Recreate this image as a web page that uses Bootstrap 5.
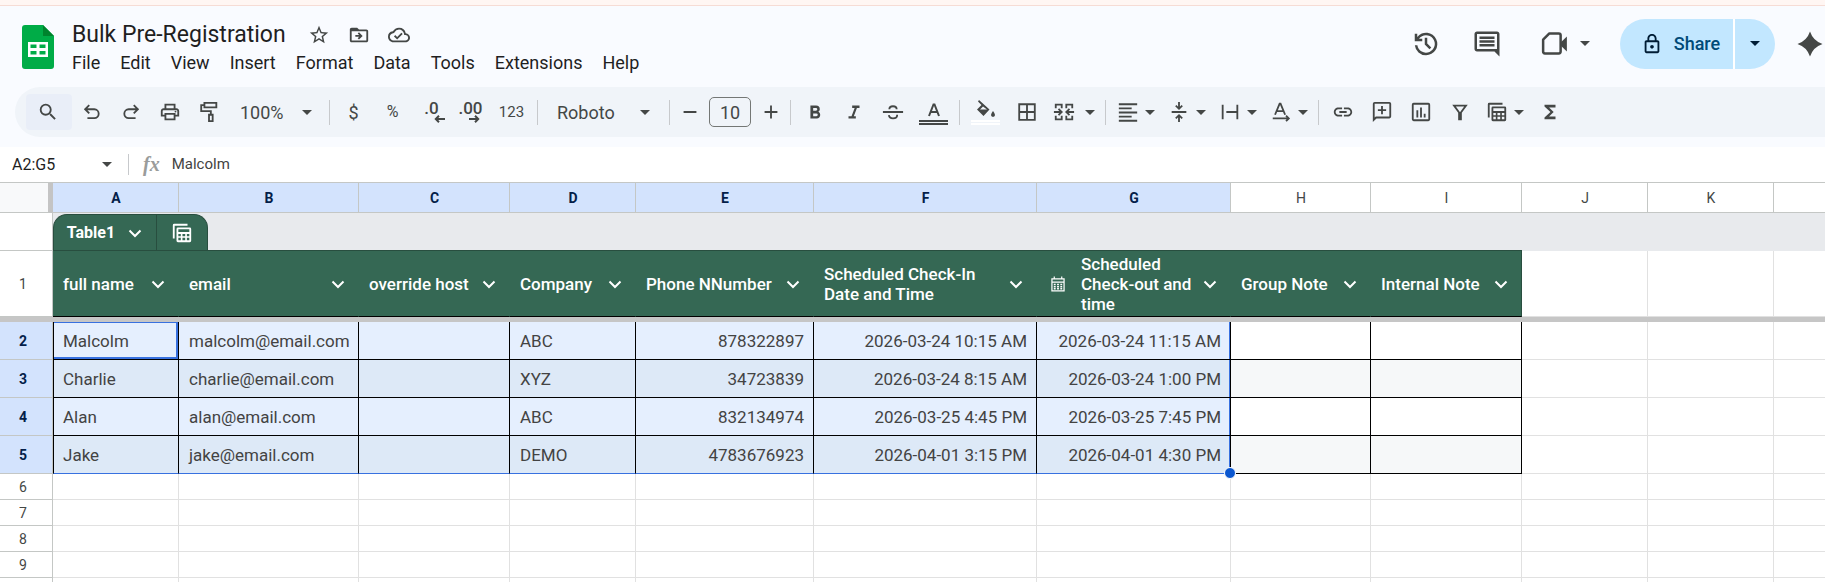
<!DOCTYPE html>
<html lang="en">
<head>
<meta charset="utf-8">
<meta name="viewport" content="width=device-width, initial-scale=1">
<title>Bulk Pre-Registration</title>
<link href="https://cdn.jsdelivr.net/npm/bootstrap@5.3.0/dist/css/bootstrap.min.css" rel="stylesheet">
<style>
:root{--ink:#444746;--green:#356854;--green-dark:#284e3f;--line:#c4c7c5;--grid:#e1e1e1;--blue:#3871e0}
body{font-family:Roboto,"Liberation Sans",sans-serif;color:#1f1f1f;background:#fff;overflow:hidden}
button,input{font-family:inherit}
svg{display:block;flex:none}
.ic{width:22px;height:22px;fill:currentColor}
.ic-lg{width:30px;height:30px;fill:currentColor}
.ln{fill:none;stroke:currentColor;stroke-width:2}
.caret{width:10px;height:5px;fill:currentColor}
.plain{border:0;background:none;padding:0;color:var(--ink);display:flex;align-items:center;justify-content:center}
.top-strip{height:6px;background:#fff6f3;border-bottom:1px solid #f6dcd5}
.app-head{background:#f9fbff;padding-bottom:10px}
.title-row{height:81px;padding-left:22px}
.title-text{margin-left:18px}
.title-icons{gap:18px;margin-left:22px}
.doc-name{font-size:23px;line-height:28px;font-weight:400;margin:0}
.menus{gap:20px;font-size:18px;line-height:20px}
.menus a{color:#1f1f1f;text-decoration:none}
.actions{padding-bottom:6px}
.actions .history{margin-right:31px}
.actions .meet{gap:10px;padding:0 14px 0 38px}
.actions .spark{padding-left:20px}
.share-pill{height:50px;border-radius:25px;background:#c2e7ff;overflow:hidden}
.share-pill button{color:#001d35;height:50px}
.share-main{width:113px;gap:11px;padding-left:8px;font-size:18px;font-weight:500}
.share-main span{color:#004a77}
.share-more{width:42px;border-left:2px solid #fff!important}
.toolbar-pill{height:50px;margin-left:15px;padding-left:11px;background:#f0f4f9;border-radius:25px 0 0 25px;color:var(--ink);overflow:hidden}
.toolbar-pill button{flex:none;height:36px}
.toolbar-pill .w-search{width:46px;padding-right:2px;background:#e9eef8;border-radius:4px}
.w-tool{width:39px}
.w-wide{width:43px;gap:2px}
.w-step{width:31px}
.w-split{width:51px;gap:6px}
.w-merge{width:55px;gap:10px}
.w-zoom{width:97px;padding:0 13px 0 12px}
.w-font{width:123px;padding:0 15px}
.bar{width:1px;height:25px;background:#c7c9cc;margin:0 4px;flex:none}
.bar-short{height:21px;margin:0 0 0 16px}
.size-box{width:42px;height:30px;border:1px solid #747775;border-radius:5px;background:none;color:var(--ink);font-size:18px;text-align:center;padding:0;margin:0 4px;flex:none}
.t18{font-size:18px}
.t16{font-size:16px}
.t15{font-size:15px}
.dec{line-height:15px;font-size:17px;font-weight:500}
.dec svg{margin-top:-1px}
.under{width:29px;height:5px}
.name-bar{height:36px;border-bottom:1px solid var(--line)}
.name-bar input{border:0;padding:0;background:none;font-size:16px;outline:0;color:#1f1f1f}
.name-bar .formula{font-size:15px;color:#434343}
.name-box{width:90px;margin-left:12px}
.fx{font:italic 700 20px "Liberation Serif",serif;color:#9a9c9b;margin:0 12px 0 14px}
.sheet{table-layout:fixed;width:100%;border-collapse:separate;border-spacing:0;font-size:17px;line-height:20px;color:#434343}
.sheet th,.sheet td{padding:0 9px 0 10px;border-right:1px solid var(--grid);border-bottom:1px solid var(--grid);vertical-align:middle;white-space:nowrap;overflow:hidden}
.sheet thead th,.sheet tbody th.num{font-size:14px;font-weight:400;text-align:center;border-color:var(--line);color:#444746}
.sheet thead th{height:30px}
.sheet tbody th.num{padding:0 6px 0 0}
.sheet thead th.sel,.sheet tbody th.num.sel{background:#d3e3fd;color:#041e49;font-weight:700}
.sheet thead th.corner{background:#f8f9fa;border-right:5px solid #c4c4c4}
.tab-row{height:38px}
.sheet .strip{background:#e8eaed;border-right:0;border-bottom-color:var(--green-dark);padding:0;vertical-align:bottom}
.sheet .strip-end{background:#e8eaed;border-color:#e8eaed}
.tab-box{display:inline-flex;height:36px;background:var(--green);border:1px solid var(--green-dark);border-bottom:0;border-radius:14px 14px 0 0;vertical-align:bottom}
.tab-box button{color:#fff;height:35px}
.tab-name{width:102px;gap:12px;font-weight:700;font-size:16px}
.tab-view{width:51px;border-left:1px solid var(--green-dark)!important}
.head-row{height:66px}
.sheet .fld{background:var(--green);border-right-color:var(--green);border-bottom-color:#000;color:#fff;font-weight:500;white-space:normal;padding-right:12px}
.sheet .fld-last{border-right-color:var(--green-dark)}
.fld .plain{color:#fff}
.chev{width:16px;height:16px;fill:none;stroke:currentColor;stroke-width:2}
.freeze{height:5px}
.sheet .freeze td{background:#c6c6c6;border:0;padding:0;line-height:0}
.rec{height:38px}
.sheet .rec td{border-color:#000}
.sheet .rec td.out{border-color:var(--grid)}
.sheet .rec td:nth-child(2){border-left:1px solid #000;padding-left:9px}
.rec td:nth-child(-n+8){background:#e5effe}
.rec.alt td:nth-child(-n+8){background:#dde9f7}
.rec.alt td:nth-child(9),.rec.alt td:nth-child(10){background:#f6f8f9}
.rec td:nth-child(8){box-shadow:inset -1px 0 var(--blue)}
.rec-end td:nth-child(-n+8){border-bottom-color:var(--blue)!important}
.rec td.active{box-shadow:inset -2px -2px var(--blue),inset 0 1px var(--blue)}
.sheet td.handle-cell{position:relative;overflow:visible}
.handle{position:absolute;right:-6px;bottom:-6px;width:12px;height:12px;border-radius:50%;background:#0b57d0;border:1px solid #fff;z-index:2}
.blank{height:26px}
</style>
<script src="https://cdn.jsdelivr.net/npm/bootstrap@5.3.0/dist/js/bootstrap.bundle.min.js"></script>
</head>
<body>
<svg class="d-none" aria-hidden="true">
  <symbol id="caret" viewBox="0 0 10 5"><path d="M0 0h10L5 5z"/></symbol>
  <symbol id="chev" viewBox="0 0 16 16"><path d="M2.500 5.500l5.500 5.500 5.500-5.500"/></symbol>
  <symbol id="views" viewBox="0 0 24 24"><path d="M2 18V3.500Q2 2 3.500 2H18v2H4v14z"/><path fill-rule="evenodd" d="M7.500 6h13A1.500 1.500 0 0 1 22 7.500v13a1.500 1.500 0 0 1-1.500 1.500h-13A1.500 1.500 0 0 1 6 20.500v-13A1.500 1.500 0 0 1 7.500 6zM8 8v3h12V8zm0 5v2.500h2.700V13zm4.500 0v2.500h3V13zm4.800 0v2.500H20V13zM8 17.300V20h2.700v-2.700zm4.500 0V20h3v-2.700zm4.800 0V20H20v-2.700z"/></symbol>
</svg>

<div class="top-strip"></div>
<header class="app-head">
  <div class="title-row d-flex align-items-center">
    <svg width="32" height="44" viewBox="0 0 32 44" role="img" aria-label="Sheets"><path fill="#00ac47" d="M3 0h18l11 11v30a3 3 0 0 1-3 3H3a3 3 0 0 1-3-3V3a3 3 0 0 1 3-3z"/><path fill="#00832d" d="M21 0l11 11H21z"/><path fill="#fff" fill-rule="evenodd" d="M6 17h20v15H6zM8.500 19.500v3.500h6v-3.500zm9 0v3.500h6v-3.500zM8.500 26v3.500h6V26zm9 0v3.500h6V26z"/></svg>
    <div class="title-text">
      <div class="d-flex align-items-center">
        <h1 class="doc-name">Bulk Pre-Registration</h1>
        <div class="title-icons d-flex">
          <button class="plain" aria-label="Star"><svg class="ic" viewBox="0 0 24 24"><path d="M22 9.240l-7.190-.62L12 2 9.190 8.630 2 9.240l5.460 4.730L5.820 21 12 17.270 18.180 21l-1.630-7.030L22 9.240zM12 15.400l-3.760 2.270 1-4.280-3.320-2.880 4.380-.38L12 6.100l1.710 4.040 4.380.38-3.320 2.880 1 4.280L12 15.400z"/></svg></button>
          <button class="plain" aria-label="Move"><svg class="ic" viewBox="0 0 24 24"><path d="M20 6h-8l-2-2H4c-1.100 0-2 .9-2 2v12c0 1.100.9 2 2 2h16c1.100 0 2-.9 2-2V8c0-1.100-.9-2-2-2zm0 12H4V8h16v10zm-8-1l4-4-4-4-1.400 1.400 1.600 1.600H8v2h4.200l-1.600 1.600z"/></svg></button>
          <button class="plain" aria-label="Document status"><svg class="ic" viewBox="0 0 24 24"><path d="M19.350 10.040A7.490 7.490 0 0 0 12 4C9.110 4 6.600 5.640 5.350 8.040A5.994 5.994 0 0 0 0 14c0 3.310 2.690 6 6 6h13c2.760 0 5-2.240 5-5 0-2.640-2.050-4.780-4.650-4.960zM19 18H6c-2.210 0-4-1.790-4-4 0-2.050 1.530-3.760 3.560-3.970l1.070-.11.5-.95A5.469 5.469 0 0 1 12 6c2.620 0 4.880 1.860 5.390 4.430l.3 1.500 1.530.11A2.980 2.980 0 0 1 22 15c0 1.650-1.350 3-3 3zm-9-3.820l-2.090-2.090L6.500 13.500 10 17l6.010-6.010-1.410-1.410z"/></svg></button>
        </div>
      </div>
      <nav class="menus d-flex mt-1">
        <a href="#">File</a><a href="#">Edit</a><a href="#">View</a><a href="#">Insert</a><a href="#">Format</a><a href="#">Data</a><a href="#">Tools</a><a href="#">Extensions</a><a href="#">Help</a>
      </nav>
    </div>
    <div class="actions ms-auto d-flex align-items-center">
      <button class="plain history" aria-label="Version history"><svg class="ic-lg" viewBox="0 0 24 24"><path d="M12 21a9 9 0 0 1-8.950-8H5.100a7 7 0 1 0 1.300-5.200H9v2H3V3.800h2v2.600A9 9 0 1 1 12 21zm2.800-4.800L11 12.400V7h2v4.600l3.200 3.200z"/></svg></button>
      <button class="plain" aria-label="Comments"><svg class="ic-lg" viewBox="0 0 24 24"><path d="M21.990 4c0-1.100-.89-2-1.990-2H4c-1.100 0-2 .9-2 2v12c0 1.100.9 2 2 2h14l4 4-.01-18zM20 4v12H4V4h16zM6 12h12v2H6zm0-3h12v2H6zm0-3h12v2H6z"/></svg></button>
      <button class="plain meet me-3" aria-label="Join a call"><svg class="ic-lg" viewBox="0 0 24 24"><path class="ln" stroke-linejoin="round" d="M7.500 3.500H15A1.500 1.500 0 0 1 16.500 5v13a1.500 1.500 0 0 1-1.500 1.500H4A1.500 1.500 0 0 1 2.500 18V8.500z"/><path d="M16.500 10.800L21.500 6v12L16.500 13.200z"/></svg><svg class="caret"><use href="#caret"/></svg></button>
      <div class="share-pill d-flex">
        <button class="plain share-main"><svg class="ic" viewBox="0 0 24 24"><path d="M18 8h-1V6c0-2.760-2.240-5-5-5S7 3.240 7 6v2H6c-1.100 0-2 .9-2 2v10c0 1.100.9 2 2 2h12c1.100 0 2-.9 2-2V10c0-1.100-.9-2-2-2zM9 6c0-1.660 1.340-3 3-3s3 1.340 3 3v2H9V6zm9 14H6V10h12v10zm-6-3c1.100 0 2-.9 2-2s-.9-2-2-2-2 .9-2 2 .9 2 2 2z"/></svg><span>Share</span></button>
        <button class="plain share-more" aria-label="Share options"><svg class="caret"><use href="#caret"/></svg></button>
      </div>
      <button class="plain spark" aria-label="Gemini"><svg class="ic-lg" viewBox="0 0 24 24"><path d="M12 2q2.500 7.500 10 10-7.500 2.500-10 10-2.500-7.500-10-10 7.500-2.500 10-10z"/></svg></button>
    </div>
  </div>

  <div class="toolbar-pill d-flex align-items-center" role="toolbar" aria-label="Main toolbar">
    <button class="plain w-search" aria-label="Search menus"><svg class="ic" viewBox="0 0 24 24"><path d="M15.500 14h-.79l-.28-.27A6.471 6.471 0 0 0 16 9.500 6.500 6.500 0 1 0 9.500 16c1.610 0 3.090-.59 4.230-1.570l.27.28v.79l5 4.990L20.490 19l-4.990-5zm-6 0C7.010 14 5 11.990 5 9.500S7.010 5 9.500 5 14 7.010 14 9.500 11.990 14 9.500 14z"/></svg></button>
    <button class="plain w-tool" aria-label="Undo"><svg class="ic" viewBox="0 0 24 24"><path class="ln" d="M9 4.500L4.500 9 9 13.500M5 9h9.500a4.800 4.800 0 0 1 0 9.600H7"/></svg></button>
    <button class="plain w-tool" aria-label="Redo"><svg class="ic" viewBox="0 0 24 24"><path class="ln" d="M15 4.500L19.500 9 15 13.500M19 9H9.500a4.800 4.800 0 0 0 0 9.600H17"/></svg></button>
    <button class="plain w-tool" aria-label="Print"><svg class="ic" viewBox="0 0 24 24"><path d="M19 8h-1V3H6v5H5c-1.660 0-3 1.340-3 3v6h4v4h12v-4h4v-6c0-1.660-1.340-3-3-3zM8 5h8v3H8V5zm8 14H8v-4h8v4zm2-4v-2H6v2H4v-4c0-.55.45-1 1-1h14c.55 0 1 .45 1 1v4h-2z"/><circle cx="18" cy="11.500" r="1"/></svg></button>
    <button class="plain w-tool" aria-label="Paint format"><svg class="ic" viewBox="0 0 24 24"><path class="ln" d="M7 2h13v5H7zM7 4.500H3.500V11H14v4M12 15h4v7h-4z"/></svg></button>
    <button class="plain w-zoom justify-content-between t18"><span>100%</span><svg class="caret"><use href="#caret"/></svg></button>
    <span class="bar"></span>
    <button class="plain w-tool t18">$</button>
    <button class="plain w-tool t16">%</button>
    <button class="plain w-tool flex-column dec" aria-label="Decrease decimal places"><span>.0</span><svg class="ms-3" width="11" height="8" viewBox="0 0 11 8"><path class="ln" d="M11 4H2M5 .8L1.800 4 5 7.200"/></svg></button>
    <button class="plain w-tool flex-column dec" aria-label="Increase decimal places"><span>.00</span><svg class="ms-2" width="11" height="8" viewBox="0 0 11 8"><path class="ln" d="M0 4h9M6 .8L9.200 4 6 7.200"/></svg></button>
    <button class="plain w-wide t15">123</button>
    <span class="bar"></span>
    <button class="plain w-font justify-content-between t18"><span>Roboto</span><svg class="caret"><use href="#caret"/></svg></button>
    <span class="bar"></span>
    <button class="plain w-step" aria-label="Decrease font size"><svg class="ic" viewBox="0 0 24 24"><path d="M5 11h14v2H5z"/></svg></button>
    <input class="size-box" value="10" aria-label="Font size">
    <button class="plain w-step" aria-label="Increase font size"><svg class="ic" viewBox="0 0 24 24"><path d="M5 11h6V5h2v6h6v2h-6v6h-2v-6H5z"/></svg></button>
    <span class="bar"></span>
    <button class="plain w-tool" aria-label="Bold"><svg class="ic" viewBox="0 0 24 24"><path fill-rule="evenodd" d="M15.600 11.800c1-.7 1.600-1.800 1.600-2.800a4 4 0 0 0-4-4H7v14h7c2.100 0 3.700-1.700 3.700-3.800 0-1.500-.8-2.800-2.100-3.400zM10 7.500h3a1.500 1.500 0 1 1 0 3h-3zm3.500 9H10v-3h3.500a1.500 1.500 0 1 1 0 3z"/></svg></button>
    <button class="plain w-tool" aria-label="Italic"><svg class="ic" viewBox="0 0 24 24"><path d="M10 5v2.500h2.700l-3.400 9H6V19h8v-2.500h-2.200l3.400-9H18V5z"/></svg></button>
    <button class="plain w-tool" aria-label="Strikethrough"><svg class="ic" viewBox="0 0 24 24"><path d="M1 11h22v2H1z"/><path class="ln" d="M16 9c0-2-1.700-3.300-4-3.300S8 7 8 9M7.500 15.500c.3 2.300 2 3.500 4.500 3.500s4.500-1.400 4.500-3.400V15"/></svg></button>
    <button class="plain w-wide flex-column" aria-label="Text color"><svg width="18" height="18" viewBox="0 0 18 18"><path class="ln" d="M4 16L8.500 4.500h1L14 16M5.500 12h7"/></svg><svg class="under" viewBox="0 0 29 5"><path fill="#444746" d="M0 0h29v5H0z"/><path fill="#f0f4f9" d="M0 2h29v1H0z"/></svg></button>
    <span class="bar"></span>
    <button class="plain w-wide flex-column" aria-label="Fill color"><svg width="20" height="18" viewBox="0 0 20 18" fill="currentColor"><path d="M3 0l10.500 9.500L7.500 16 1 9.500 5.500 5 2 1.500zM7 6.500L4 9.500h7z" fill-rule="evenodd"/><path d="M17 11q4 5 0 6-4-1 0-6z"/></svg><svg class="under" viewBox="0 0 29 5"><path fill="#fff" d="M0 0h29v5H0z"/><path fill="#f0f4f9" d="M0 2h29v1H0z"/></svg></button>
    <button class="plain w-tool" aria-label="Borders"><svg class="ic" viewBox="0 0 24 24"><path class="ln" d="M3.500 3.500h17v17h-17zM12 3.500v17M3.500 12h17"/></svg></button>
    <button class="plain w-merge" aria-label="Merge cells"><svg class="ic" viewBox="0 0 24 24"><path class="ln" d="M3 8V4h6.500v4M3 16v4h6.500v-4M21 8V4h-6.500v4M21 16v4h-6.500v-4M1 12h8M6 8.500L9.500 12 6 15.500M23 12h-8M18 8.500L14.500 12l3.500 3.500"/></svg><svg class="caret"><use href="#caret"/></svg></button>
    <span class="bar"></span>
    <button class="plain w-split" aria-label="Horizontal align"><svg class="ic" viewBox="0 0 24 24"><path d="M2 2.500h20v2H2zM2 7h14v2H2zm0 4.500h20v2H2zM2 16h14v2H2zm0 4.500h20v2H2z"/></svg><svg class="caret"><use href="#caret"/></svg></button>
    <button class="plain w-split" aria-label="Vertical align"><svg class="ic" viewBox="0 0 24 24"><path class="ln" d="M4 12h16M12 1v7M8.500 5L12 8.500 15.500 5M12 23v-7M8.500 19l3.500-3.500 3.500 3.500"/></svg><svg class="caret"><use href="#caret"/></svg></button>
    <button class="plain w-split" aria-label="Text wrapping"><svg class="ic" viewBox="0 0 24 24"><path class="ln" d="M4 4v16M20 4v16M8 12h12"/></svg><svg class="caret"><use href="#caret"/></svg></button>
    <button class="plain w-split" aria-label="Text rotation"><svg class="ic" viewBox="0 0 24 24"><path class="ln" d="M5.500 15L10.500 3h1l5 12M7 11h8M3 19h17M17.500 16l3 3-3 3"/></svg><svg class="caret"><use href="#caret"/></svg></button>
    <span class="bar"></span>
    <button class="plain w-tool" aria-label="Insert link"><svg class="ic" viewBox="0 0 24 24"><path d="M3.900 12c0-1.710 1.390-3.100 3.100-3.100h4V7H7c-2.760 0-5 2.240-5 5s2.240 5 5 5h4v-1.900H7c-1.710 0-3.100-1.390-3.100-3.100zM8 13h8v-2H8v2zm9-6h-4v1.900h4c1.710 0 3.100 1.390 3.100 3.100s-1.390 3.100-3.100 3.100h-4V17h4c2.760 0 5-2.240 5-5s-2.240-5-5-5z"/></svg></button>
    <button class="plain w-tool" aria-label="Insert comment"><svg class="ic" viewBox="0 0 24 24"><path d="M4 1h16a2 2 0 0 1 2 2v14a2 2 0 0 1-2 2H6l-4 4V3a2 2 0 0 1 2-2zm0 2v15l1.200-1H20V3zm7 2.500h2V9h3.500v2H13v3.500h-2V11H7.500V9H11z"/></svg></button>
    <button class="plain w-tool" aria-label="Insert chart"><svg class="ic" viewBox="0 0 24 24"><path class="ln" d="M4 3h16a1 1 0 0 1 1 1v16a1 1 0 0 1-1 1H4a1 1 0 0 1-1-1V4a1 1 0 0 1 1-1zM8 10v8M12 7v11M16 14v4"/></svg></button>
    <button class="plain w-tool" aria-label="Create a filter"><svg class="ic" viewBox="0 0 24 24"><path class="ln" d="M5.500 5h13L13 12.500V20h-2v-7.500z"/></svg></button>
    <button class="plain w-split" aria-label="Table views"><svg class="ic"><use href="#views"/></svg><svg class="caret"><use href="#caret"/></svg></button>
    <button class="plain w-tool" aria-label="Functions"><svg class="ic" viewBox="0 0 24 24"><path d="M18 4H6v2l6.500 6L6 18v2h12v-3h-7l5-5-5-5h7z"/></svg></button>
  </div>
</header>

<div class="name-bar d-flex align-items-center">
  <input class="name-box" value="A2:G5" aria-label="Name box">
  <button class="plain" aria-label="Named ranges"><svg class="caret"><use href="#caret"/></svg></button>
  <span class="bar bar-short"></span>
  <span class="fx">fx</span>
  <input class="formula flex-grow-1" value="Malcolm" aria-label="Formula">
</div>

<table class="sheet">
  <colgroup>
    <col style="width:53px"><col style="width:126px"><col style="width:180px"><col style="width:151px"><col style="width:126px"><col style="width:178px"><col style="width:223px"><col style="width:194px"><col style="width:140px"><col style="width:151px"><col style="width:126px"><col style="width:126px"><col>
  </colgroup>
  <thead>
    <tr><th class="corner"></th><th class="sel">A</th><th class="sel">B</th><th class="sel">C</th><th class="sel">D</th><th class="sel">E</th><th class="sel">F</th><th class="sel">G</th><th>H</th><th>I</th><th>J</th><th>K</th><th class="border-end-0"></th></tr>
  </thead>
  <tbody>
    <tr class="tab-row">
      <th class="num"></th>
      <td class="strip" colspan="9"><div class="tab-box"><button class="plain tab-name"><span>Table1</span><svg class="chev"><use href="#chev"/></svg></button><button class="plain tab-view" aria-label="Table views"><svg class="ic"><use href="#views"/></svg></button></div></td>
      <td class="strip-end" colspan="3"></td>
    </tr>
    <tr class="head-row">
      <th class="num">1</th>
      <th class="fld"><div class="d-flex align-items-center justify-content-between"><span>full name</span><button class="plain" aria-label="Column menu"><svg class="chev"><use href="#chev"/></svg></button></div></th>
      <th class="fld"><div class="d-flex align-items-center justify-content-between"><span>email</span><button class="plain" aria-label="Column menu"><svg class="chev"><use href="#chev"/></svg></button></div></th>
      <th class="fld"><div class="d-flex align-items-center justify-content-between"><span>override host</span><button class="plain" aria-label="Column menu"><svg class="chev"><use href="#chev"/></svg></button></div></th>
      <th class="fld"><div class="d-flex align-items-center justify-content-between"><span>Company</span><button class="plain" aria-label="Column menu"><svg class="chev"><use href="#chev"/></svg></button></div></th>
      <th class="fld"><div class="d-flex align-items-center justify-content-between"><span>Phone NNumber</span><button class="plain" aria-label="Column menu"><svg class="chev"><use href="#chev"/></svg></button></div></th>
      <th class="fld"><div class="d-flex align-items-center justify-content-between"><span>Scheduled Check-In<br>Date and Time</span><button class="plain" aria-label="Column menu"><svg class="chev"><use href="#chev"/></svg></button></div></th>
      <th class="fld"><div class="d-flex align-items-center"><svg class="ms-1" width="14" height="16" viewBox="0 0 15 16"><path fill="none" stroke="#fff" stroke-width="1.300" d="M1 2.500h13v12.800H1zM1 6h13M3.500 0v3M11.500 0v3"/><path stroke="#fff" stroke-width="1.600" stroke-dasharray="2 1.500" d="M3 8.500h9M3 11h9M3 13.200h9"/></svg><span class="ms-3">Scheduled<br>Check-out and<br>time</span><button class="plain ms-auto" aria-label="Column menu"><svg class="chev"><use href="#chev"/></svg></button></div></th>
      <th class="fld"><div class="d-flex align-items-center justify-content-between"><span>Group Note</span><button class="plain" aria-label="Column menu"><svg class="chev"><use href="#chev"/></svg></button></div></th>
      <th class="fld fld-last"><div class="d-flex align-items-center justify-content-between"><span>Internal Note</span><button class="plain" aria-label="Column menu"><svg class="chev"><use href="#chev"/></svg></button></div></th>
      <td></td><td></td><td class="border-end-0"></td>
    </tr>
    <tr class="freeze"><td colspan="13"></td></tr>
    <tr class="rec"><th class="num sel">2</th><td class="active">Malcolm</td><td>malcolm@email.com</td><td></td><td>ABC</td><td class="text-end">878322897</td><td class="text-end">2026-03-24 10:15 AM</td><td class="text-end">2026-03-24 11:15 AM</td><td></td><td></td><td class="out"></td><td class="out"></td><td class="out border-end-0"></td></tr>
    <tr class="rec alt"><th class="num sel">3</th><td>Charlie</td><td>charlie@email.com</td><td></td><td>XYZ</td><td class="text-end">34723839</td><td class="text-end">2026-03-24 8:15 AM</td><td class="text-end">2026-03-24 1:00 PM</td><td></td><td></td><td class="out"></td><td class="out"></td><td class="out border-end-0"></td></tr>
    <tr class="rec"><th class="num sel">4</th><td>Alan</td><td>alan@email.com</td><td></td><td>ABC</td><td class="text-end">832134974</td><td class="text-end">2026-03-25 4:45 PM</td><td class="text-end">2026-03-25 7:45 PM</td><td></td><td></td><td class="out"></td><td class="out"></td><td class="out border-end-0"></td></tr>
    <tr class="rec alt rec-end"><th class="num sel">5</th><td>Jake</td><td>jake@email.com</td><td></td><td>DEMO</td><td class="text-end">4783676923</td><td class="text-end">2026-04-01 3:15 PM</td><td class="text-end handle-cell">2026-04-01 4:30 PM<span class="handle"></span></td><td></td><td></td><td class="out"></td><td class="out"></td><td class="out border-end-0"></td></tr>
    <tr class="blank"><th class="num">6</th><td></td><td></td><td></td><td></td><td></td><td></td><td></td><td></td><td></td><td></td><td></td><td class="border-end-0"></td></tr>
    <tr class="blank"><th class="num">7</th><td></td><td></td><td></td><td></td><td></td><td></td><td></td><td></td><td></td><td></td><td></td><td class="border-end-0"></td></tr>
    <tr class="blank"><th class="num">8</th><td></td><td></td><td></td><td></td><td></td><td></td><td></td><td></td><td></td><td></td><td></td><td class="border-end-0"></td></tr>
    <tr class="blank"><th class="num">9</th><td></td><td></td><td></td><td></td><td></td><td></td><td></td><td></td><td></td><td></td><td></td><td class="border-end-0"></td></tr>
    <tr class="blank"><th class="num"></th><td></td><td></td><td></td><td></td><td></td><td></td><td></td><td></td><td></td><td></td><td></td><td class="border-end-0"></td></tr>
  </tbody>
</table>
</body>
</html>
